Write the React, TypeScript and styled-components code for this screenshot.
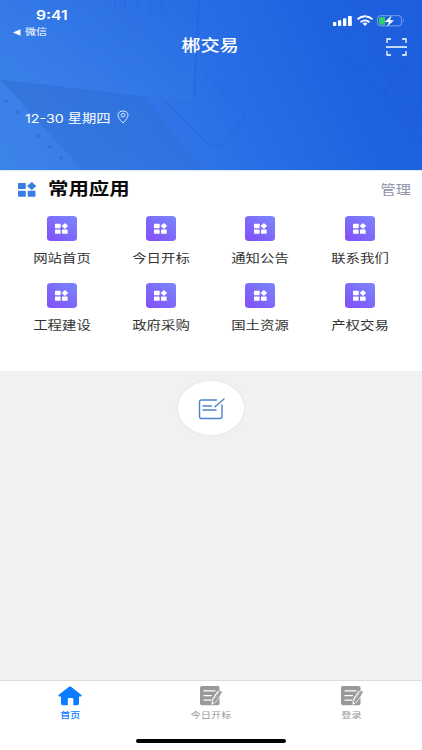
import React from "react";
import styled, { createGlobalStyle } from "styled-components";

const Global = createGlobalStyle`
  * { box-sizing: border-box; }
  body { margin: 0; font-family: Inter, "Noto Sans CJK SC", sans-serif; background: #fff; }
`;

const Screen = styled.main`
  width: 422px;
  height: 750px;
  display: flex;
  flex-direction: column;
  overflow: hidden;
  background: #f1f1f1;
`;

const Hero = styled.header`
  position: relative;
  height: 170px;
  flex: none;
  display: flex;
  flex-direction: column;
  color: #fff;
  background: linear-gradient(65deg, #3d84e8 0%, #3579e8 28%, #286de6 55%, #1f62e0 78%, #1c5edd 100%);
`;

const Backdrop = styled.svg`
  position: absolute;
  inset: 0;
`;

const Text = styled.span<{ $size: number; $stretch?: number; $weight?: number; $origin?: string; $gap?: number }>`
  display: block;
  position: relative;
  white-space: nowrap;
  font-size: ${(p) => p.$size}px;
  font-weight: ${(p) => p.$weight ?? 400};
  letter-spacing: ${(p) => p.$gap ?? 0}px;
  line-height: 1;
  transform: scaleX(${(p) => p.$stretch ?? 1.2});
  transform-origin: ${(p) => p.$origin ?? "center"};
`;

const StatusBar = styled.div`
  display: flex;
  justify-content: space-between;
  height: 26px;
  padding: 9px 17px 0 36px;
`;

const StatusIcons = styled.div`
  display: flex;
  padding-top: 5px;
`;

const BackLink = styled.div`
  position: relative;
  display: flex;
  align-items: center;
  gap: 4px;
  height: 12px;
  padding-left: 13px;
`;

const TitleBar = styled.div`
  display: grid;
  grid-template-columns: 1fr auto 1fr;
  align-items: center;
  height: 16px;
  margin-top: -1px;
  padding: 0 15px 0 14px;
`;

const Title = styled.div`
  padding-bottom: 3px;
`;

const ScanButton = styled.div`
  position: relative;
  justify-self: end;
  height: 18px;
`;

const Clock = styled.div`
  padding-top: 1px;
`;

const DateRow = styled.div`
  display: flex;
  align-items: center;
  justify-content: space-between;
  width: 104px;
  height: 16px;
  margin: 58px 0 0 25px;
`;

const Pin = styled.svg`
  position: relative;
  flex: none;
  margin-top: -5px;
`;

const Apps = styled.section`
  height: 201px;
  flex: none;
  background: #fff;
  border-top: 1px solid #d9ebfc;
`;

const AppsHead = styled.div`
  display: flex;
  align-items: center;
  height: 36px;
  padding: 0 11px 0 18px;
`;

const Heading = styled.div`
  flex: 1;
  padding-left: 12px;
  color: #0b0b0b;
`;

const Manage = styled.div`
  color: #8f93a8;
`;

const Grid = styled.div`
  display: grid;
  grid-template-columns: repeat(4, 99.3px);
  grid-auto-rows: 67px;
  padding: 9px 0 0 12px;
`;

const Tile = styled.div`
  display: flex;
  flex-direction: column;
  align-items: center;
  gap: 12px;
  color: #333;
`;

const TileIcon = styled.div`
  display: grid;
  place-items: center;
  width: 30px;
  height: 25px;
  border-radius: 4px / 3px;
  background: linear-gradient(35deg, #8350fa 5%, #7d6bfa 50%, #7b86fc 100%);
`;

const Body = styled.section`
  flex: 1;
  padding-top: 10px;
`;

const NoteButton = styled.div`
  display: grid;
  place-items: center;
  width: 66px;
  height: 54px;
  margin: 0 auto;
  padding-top: 1px;
  border-radius: 50%;
  background: #fff;
  box-shadow: 0 0 3px rgba(90, 100, 130, 0.13);
`;

const TabBar = styled.nav`
  display: grid;
  grid-template-columns: repeat(3, 1fr);
  height: 57px;
  flex: none;
  padding-top: 5px;
  background: #fff;
  border-top: 1px solid #dcdcdc;
`;

const Tab = styled.div<{ $active?: boolean }>`
  display: flex;
  flex-direction: column;
  align-items: center;
  gap: 5px;
  color: ${(p) => (p.$active ? "#0a7cff" : "#999")};
`;

const HomeArea = styled.footer`
  display: flex;
  justify-content: center;
  height: 13px;
  flex: none;
  padding-top: 2px;
  background: #fff;
`;

const HomeIndicator = styled.div`
  width: 150px;
  height: 4px;
  border-radius: 2px;
  background: #000;
`;

const AppsGlyph = ({ w, h }: { w: number; h: number }) => (
  <svg width={w} height={h} viewBox="0 0 18 15" preserveAspectRatio="none" fill="currentColor">
    <rect x="0" y="1" width="7.8" height="6" rx=".7" />
    <rect x="0" y="8.8" width="7.8" height="6" rx=".7" />
    <rect x="9.7" y="8.8" width="7.8" height="6" rx=".7" />
    <path d="M13.8.3 18 4 13.8 7.8 9.3 4Z" stroke="currentColor" strokeWidth=".5" strokeLinejoin="round" />
  </svg>
);

const TabNote = () => (
  <svg width="24" height="20" viewBox="0 0 24 20">
    <path d="M3 0h15.5q2 0 2 1.8V17.3q0 2-2 2H3q-2 0-2-2V2Q1 0 3 0Z" fill="#999" />
    <path d="M5 4.9h11M5 9.6h7.5M5 14.2h6.5" stroke="#fff" strokeWidth="1.3" strokeLinecap="round" />
    <path d="m22 6.3-5.7 8.8-2.4 1.5.1-2.6 6-8.7" fill="#999" stroke="#fff" strokeWidth="2.6" />
    <path d="m22.5 6.2-6.2 9.2-2.2 1.3.1-2.5 6.2-9" fill="none" stroke="#999" strokeWidth="1" strokeLinejoin="round" />
    <path d="m21.8 6-6.3 9.1" stroke="#999" strokeWidth="1.9" strokeLinecap="round" />
  </svg>
);

const apps = ["网站首页", "今日开标", "通知公告", "联系我们", "工程建设", "政府采购", "国土资源", "产权交易"];

export default function App() {
  return (
    <>
      <Global />
      <Screen>
        <Hero>
          <Backdrop width="422" height="170" viewBox="0 0 422 170">
            <defs>
              <linearGradient id="sheet" x1="0" y1="1" x2="1" y2="0">
                <stop offset="0" stopColor="#3d83ea" />
                <stop offset="1" stopColor="#266ae2" />
              </linearGradient>
              <linearGradient id="cover" x1="0" y1="0" x2="1" y2="0.6">
                <stop offset="0" stopColor="#2a67c8" stopOpacity=".42" />
                <stop offset="1" stopColor="#2a67c8" stopOpacity=".22" />
              </linearGradient>
            </defs>
            <path d="M0 0H198L193 101 145 97 0 80Z" fill="url(#sheet)" opacity=".6" />
            <path d="M0 80 145 97 204 170H82L8 88Z" fill="url(#cover)" />
            <path d="M199 0 194 95" stroke="#1d5bd3" strokeWidth="2" opacity=".3" />
            <path d="M0 80 145 97 193 101" fill="none" stroke="#2966d2" opacity=".3" />
            <g fill="#2860c8" opacity=".5">
              <ellipse cx="6" cy="101" rx="1.8" ry="1.4" />
              <ellipse cx="17" cy="112" rx="1.8" ry="1.4" />
              <ellipse cx="39" cy="136" rx="1.8" ry="1.4" />
              <ellipse cx="50" cy="147" rx="1.8" ry="1.4" />
              <ellipse cx="61" cy="158" rx="1.8" ry="1.4" />
            </g>
            <g fill="none" stroke="#174fc4" strokeWidth="1.3" opacity=".17">
              <path d="M302 12 318 0M338 50 368 14M338 50 360 71 393 31M343 0 355 8M365 75 380 97 413 56M386 102 404 125 422 104M408 127 422 143M383 96 408 66" />
              <path d="M200 68 242 113Q246 118 241 123L225 142Q217 150 208 144L165 101" />
              <path d="M115 0V11M125 0V11M138 0V12M150 0V13M162 0V14" />
            </g>
          </Backdrop>
          <StatusBar>
            <Clock><Text $size={12.8} $weight={600} $stretch={1.23} $origin="left">9:41</Text></Clock>
            <StatusIcons>
              <svg width="73" height="14" viewBox="0 0 73 14">
                <g fill="#fff">
                  <rect x="1" y="8" width="3.3" height="4" rx=".7" />
                  <rect x="6" y="6.3" width="3.3" height="5.7" rx=".7" />
                  <rect x="11" y="4.2" width="3.3" height="7.8" rx=".7" />
                  <rect x="16" y="2" width="3.8" height="10" rx=".7" />
                </g>
                <g fill="none" stroke="#fff" strokeWidth="1.8">
                  <path d="M25.5 5.2Q33 -.7 40.5 5.2M28.5 8.2Q33 4.5 37.5 8.2" />
                </g>
                <path d="M30.6 9.5Q33 7.7 35.4 9.5L33 12Z" fill="#fff" />
                <rect x="45.5" y="1.7" width="24" height="10.2" rx="3" fill="none" stroke="#fff" opacity=".4" />
                <path d="M49 3h4v7.8h-4q-2 0-2-2V5q0-2 2-2Z" fill="#32cc66" />
                <path d="M59.7 1.5 52.7 7.9h4.2L55 12.7 62 6.2h-4.1Z" fill="#fff" />
                <path d="M71 5q1.6 1.7 0 3.4Z" fill="#fff" opacity=".6" />
              </svg>
            </StatusIcons>
          </StatusBar>
          <BackLink>
            <svg width="8" height="7" viewBox="0 0 8 7"><path d="M0 3.5 7.5.3v6.4Z" fill="#fff" /></svg>
            <Text $size={9.5} $stretch={1.16} $origin="left">微信</Text>
          </BackLink>
          <TitleBar>
            <span />
            <Title><Text $size={16} $stretch={1.2} $weight={500}>郴交易</Text></Title>
            <ScanButton>
              <svg width="21" height="18" viewBox="0 0 21 18" fill="none" stroke="#fff" strokeWidth="1.3">
                <path d="M1 5V1h4M16 1h4v4M20 13v4h-4M5 17H1v-4M0 9h21" />
              </svg>
            </ScanButton>
          </TitleBar>
          <DateRow>
            <Text $size={12} $stretch={1.19} $origin="left">12-30 星期四</Text>
            <Pin width="12" height="14" viewBox="0 0 12 14" fill="none" stroke="#dce9ff" strokeWidth="1">
              <path d="M6 13Q1 8 1 5.2C1 2.6 3 1 6 1s5 1.6 5 4.2Q11 8 6 13Z" />
              <ellipse cx="6" cy="5.2" rx="2" ry="1.7" />
            </Pin>
          </DateRow>
        </Hero>
        <Apps>
          <AppsHead>
            <AppsGlyphBlue><AppsGlyph w={18} h={15} /></AppsGlyphBlue>
            <Heading><Text $size={17} $stretch={1.2} $weight={700} $origin="left">常用应用</Text></Heading>
            <Manage><Text $size={13} $stretch={1.17} $origin="right">管理</Text></Manage>
          </AppsHead>
          <Grid>
            {apps.map((name) => (
              <Tile key={name}>
                <TileIcon><svg width="13" height="11" color="#fff"><AppsGlyph w={13} h={11} /></svg></TileIcon>
                <Text $size={12} $stretch={1.2}>{name}</Text>
              </Tile>
            ))}
          </Grid>
        </Apps>
        <Body>
          <NoteButton>
            <svg width="27" height="22" viewBox="0 0 27 22" fill="none" stroke="#4d83cb" strokeWidth="1.4" strokeLinecap="round">
              <path d="M18.5 2H3.5Q1.5 2 1.5 4v14.5q0 2 2 2H22q2 0 2-2V7M5 8h8.5M5 12h13M17 8.8 26 1" />
            </svg>
          </NoteButton>
        </Body>
        <TabBar>
          <Tab $active>
            <svg width="24" height="20" viewBox="0 0 24 20">
              <path d="M11 .8q1-.8 2 0l10.2 8q1 1.3-.5 1.7H21v7q0 1.7-1.7 1.7h-4V13q0-1-1-1H10.8q-1 0-1 1v6.2h-5Q3 19.2 3 17.5v-7H1.3Q-.2 10.1.8 8.8Z" fill="#0a7cff" />
            </svg>
            <Text $size={8.3} $weight={500}>首页</Text>
          </Tab>
          <Tab><TabNote /><Text $size={8.5}>今日开标</Text></Tab>
          <Tab><TabNote /><Text $size={8.5}>登录</Text></Tab>
        </TabBar>
        <HomeArea><HomeIndicator /></HomeArea>
      </Screen>
    </>
  );
}

const AppsGlyphBlue = styled.div`
  display: flex;
  color: #397ce2;
`;
